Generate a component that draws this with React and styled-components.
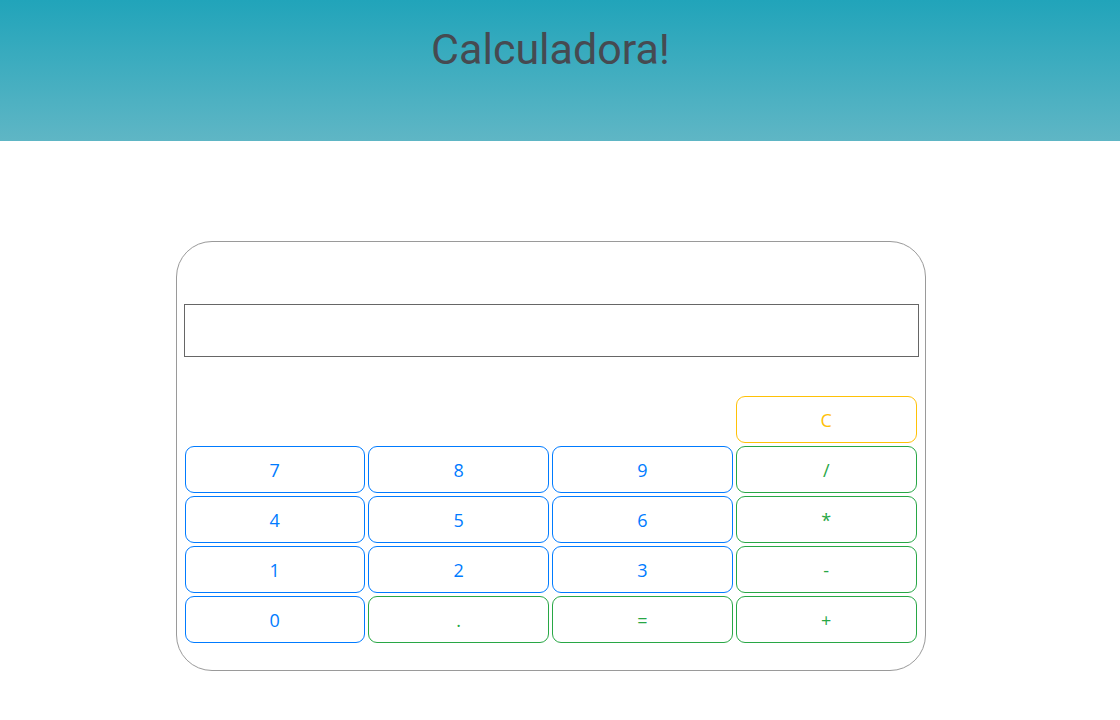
import React from "react";
import styled, { createGlobalStyle } from "styled-components";

const Global = createGlobalStyle`
  html, body { margin: 0; padding: 0; background: #fff; }
  body { font-family: "Open Sans", "Noto Sans", sans-serif; }
`;

const Header = styled.header`
  height: 141px;
  background: linear-gradient(to bottom, #21a4ba 0%, #5fb6c5 100%);
  box-sizing: border-box;
  padding-top: 22px;
`;

const Inner = styled.div`
  width: 1101px;
  display: flex;
  flex-direction: column;
  align-items: center;
`;

const Title = styled.h1`
  margin: 0;
  font-family: "Roboto", "Noto Sans", sans-serif;
  font-weight: 400;
  font-size: 43px;
  line-height: 54px;
  color: #464a51;
  letter-spacing: 0px;
`;

const Main = styled.main`
  padding-top: 100px;
`;

const Card = styled.div`
  width: 750px;
  box-sizing: border-box;
  border: 1px solid #9a9a9a;
  border-radius: 36px;
  padding: 62px 6px 27px 7px;
  display: flex;
  flex-direction: column;
  align-items: flex-start;
`;

const Display = styled.input`
  width: 735px;
  height: 53px;
  box-sizing: border-box;
  border: 1px solid #666;
  border-radius: 0;
  margin: 0 0 39px 0;
  padding: 0 8px;
  font-family: "Open Sans", sans-serif;
  font-size: 20px;
  outline: none;
`;

const Keys = styled.div`
  width: 732px;
  margin-left: 1px;
  display: grid;
  grid-template-columns: repeat(4, 1fr);
  grid-auto-rows: 47px;
  column-gap: 3.3px;
  row-gap: 3px;
`;

const colors = {
  primary: "#007bff",
  success: "#28a745",
  warning: "#ffc107",
};

const Key = styled.button`
  grid-column: ${(p) => p.$col || "auto"};
  box-sizing: border-box;
  background: #fff;
  border: 1px solid ${(p) => colors[p.$variant]};
  color: ${(p) => colors[p.$variant]};
  border-radius: 9px;
  font-family: "Open Sans", "Noto Sans", sans-serif;
  font-size: 18px;
  font-weight: 400;
  padding: 0;
  cursor: pointer;
`;

const rows = [
  [["7", "primary"], ["8", "primary"], ["9", "primary"], ["/", "success"]],
  [["4", "primary"], ["5", "primary"], ["6", "primary"], ["*", "success"]],
  [["1", "primary"], ["2", "primary"], ["3", "primary"], ["-", "success"]],
  [["0", "primary"], [".", "success"], ["=", "success"], ["+", "success"]],
];

export default function App() {
  return (
    <>
      <Global />
      <Header>
        <Inner>
          <Title>Calculadora!</Title>
        </Inner>
      </Header>
      <Main>
        <Inner>
          <Card>
            <Display readOnly value="" />
            <Keys>
              <Key $variant="warning" $col="4">C</Key>
              {rows.flat().map(([label, v], i) => (
                <Key key={i} $variant={v}>{label}</Key>
              ))}
            </Keys>
          </Card>
        </Inner>
      </Main>
    </>
  );
}
